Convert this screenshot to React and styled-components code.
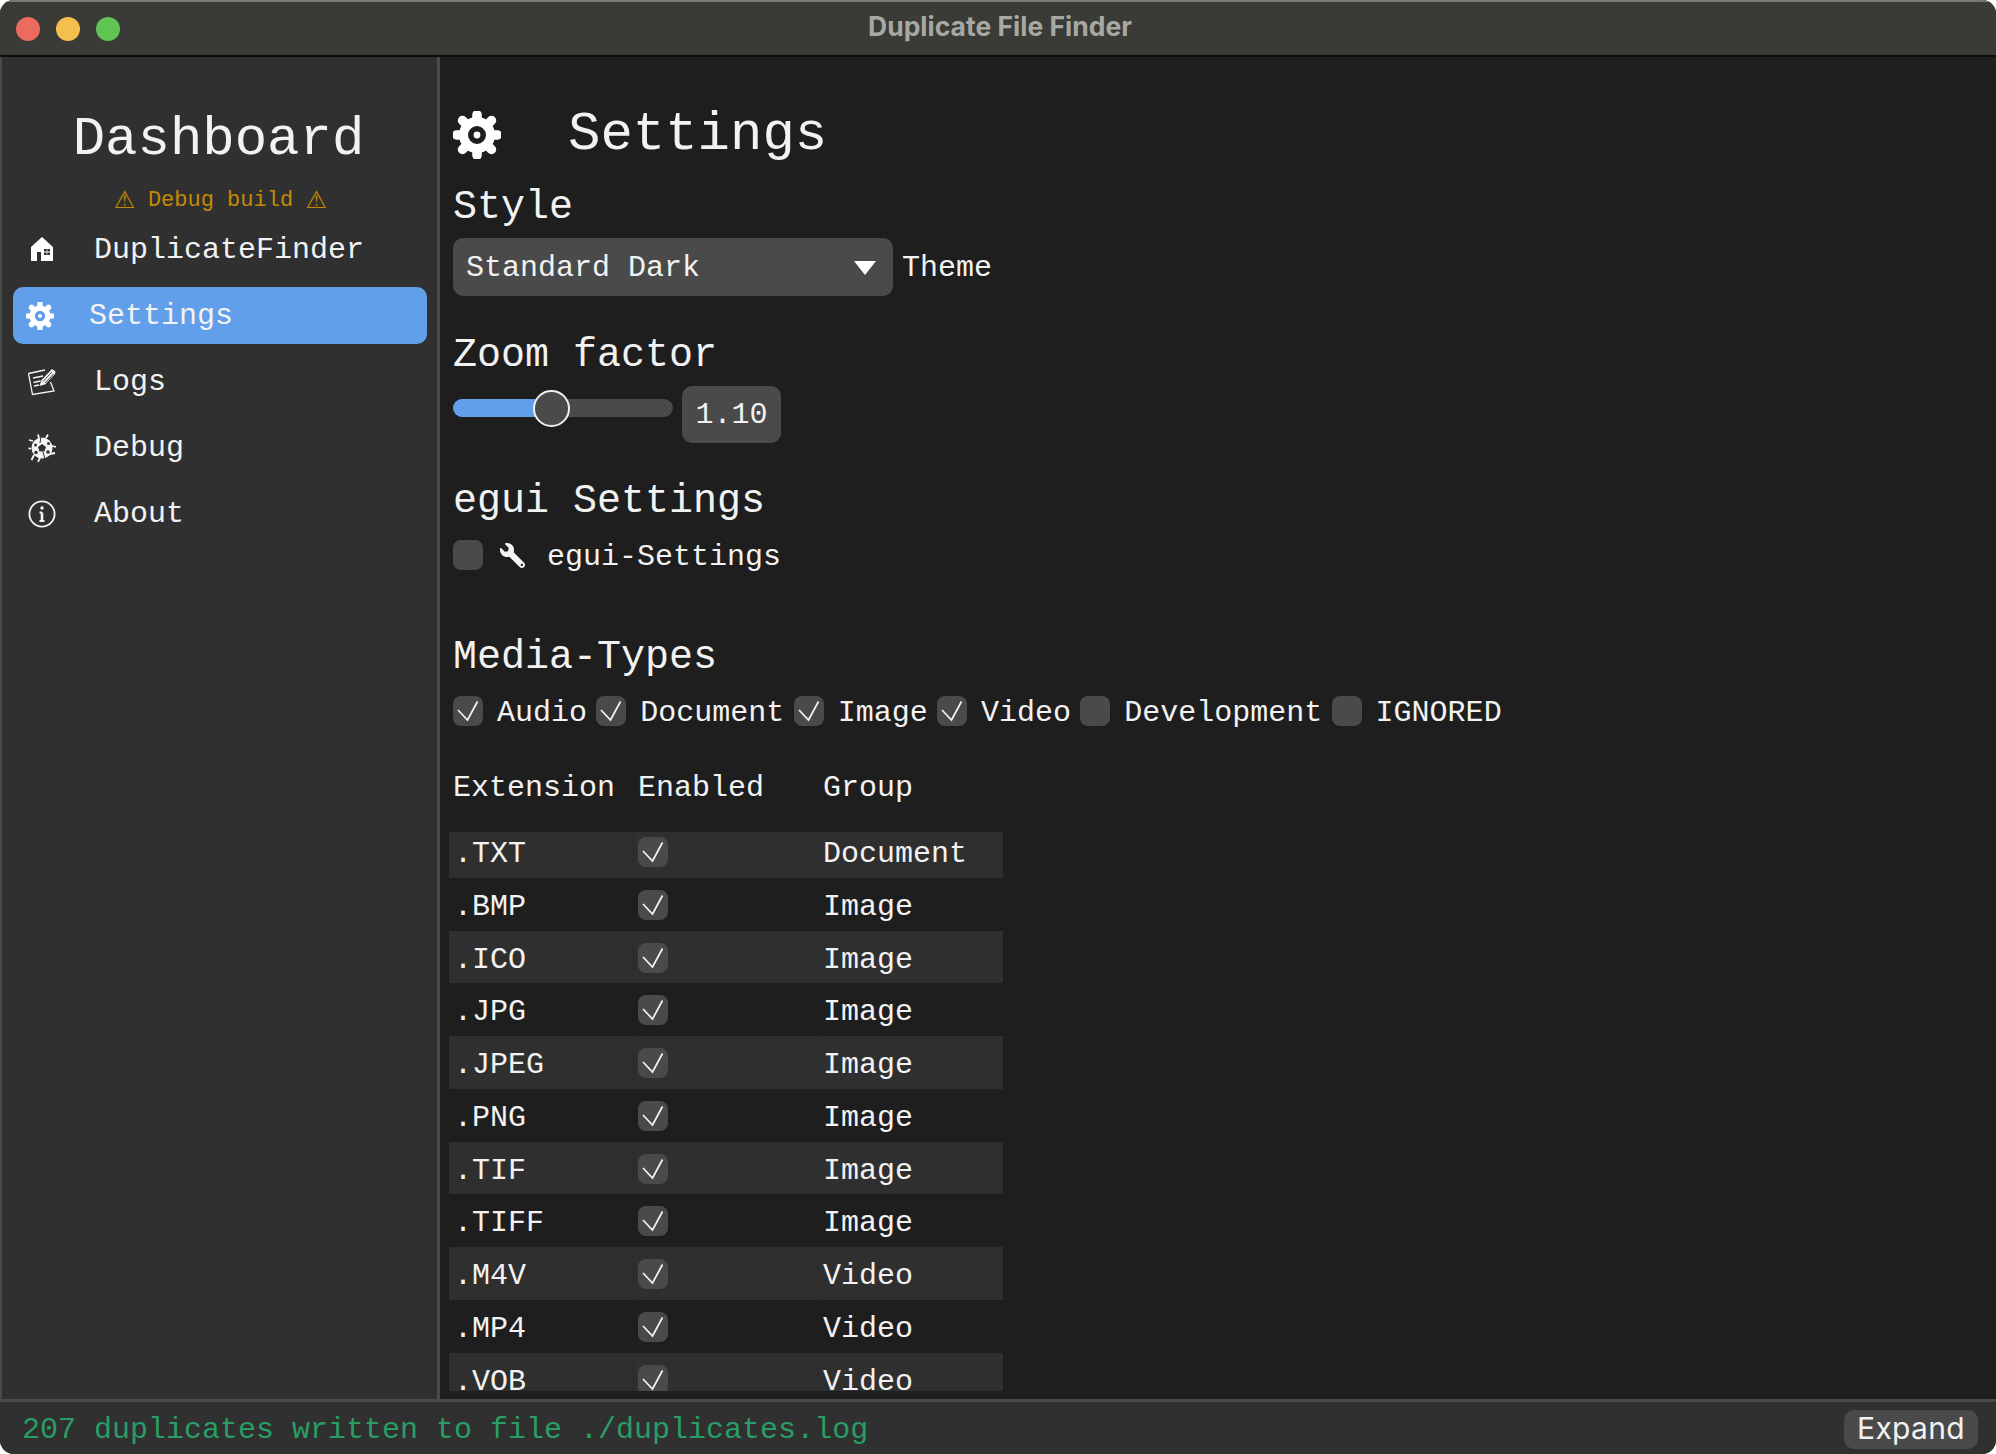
import React from "react";
import styled, { createGlobalStyle } from "styled-components";
import { FaWrench } from "react-icons/fa";

const mono = `"Liberation Mono", "DejaVu Sans Mono", monospace`;
const sans = `Inter, "Liberation Sans", sans-serif`;

const Global = createGlobalStyle`
  html, body { margin: 0; padding: 0; background: #ffffff; overflow: hidden; }
  * { box-sizing: border-box; }
`;

const Win = styled.div`
  width: 1996px; height: 1454px; display: flex; flex-direction: column;
  border-radius: 14px; overflow: hidden; background: #303030;
  font-family: ${mono}; color: #f2f2f2; font-size: 30px; line-height: 40px;
`;
const TitleBar = styled.header`
  height: 57px; flex: none; display: flex; align-items: center; position: relative;
  background: #3a3a36; border-top: 2px solid #7a7a74; border-bottom: 2px solid #0c0c0c;
  padding-left: 16px; gap: 16px;
`;
const Light = styled.span`
  width: 24px; height: 24px; border-radius: 50%; background: ${p => p.$c};
`;
const Title = styled.div`
  position: absolute; left: 0; right: 0; top: 0; bottom: 0; display: flex; align-items: center; justify-content: center;
  padding: 0 0 4px 4px;
  font: 700 26.5px/1 ${sans}; color: #a8a8a2;
`;
const Body = styled.div`flex: 1; display: flex; min-height: 0;`;
const Side = styled.aside`
  width: 440px; flex: none; background: #303030; border-right: 3px solid #4a4a4a;
  border-left: 2px solid #4a4a4a; padding: 0 10px 0 11px; display: flex; flex-direction: column;
`;
const Dash = styled.div`
  font-size: 54px; line-height: 60px; text-align: center; margin-top: 53px; padding-right: 3px;
`;
const DebugNote = styled.div`
  font-size: 22px; line-height: 28px; color: #c48a06; margin-top: 16px;
  display: flex; justify-content: center; align-items: center; gap: 12.5px; padding-left: 1px;
`;
const Warn = styled.span`
  font-family: "DejaVu Sans", sans-serif; font-size: 24px; line-height: 28px; margin-bottom: 2px;
`;
const NavList = styled.nav`display: flex; flex-direction: column; gap: 9px; margin-top: 5px;`;
const NavItem = styled.div`
  height: 57px; display: flex; align-items: center; border-radius: 10px; line-height: 40px;
  background: ${p => (p.$active ? "#619fea" : "transparent")};
  padding-left: ${p => (p.$active ? "13px" : "15px")};
  gap: ${p => (p.$active ? "35px" : "38px")};
`;
const NavIcon = styled.span`width: 28px; height: 28px; flex: none; display: block; svg { display: block; }`;
const Main = styled.main`
  flex: 1; background: #1e1e1e; padding: 48px 0 0 13px; min-width: 0; overflow: hidden;
`;
const PageHead = styled.div`display: flex; align-items: center; height: 60px; gap: 67px; font-size: 54px; line-height: 60px;`;
const H2 = styled.div`font-size: 40px; line-height: 48px; margin-top: ${p => p.$mt}px;`;
const Row = styled.div`display: flex; align-items: center; margin-top: ${p => p.$mt || 0}px;`;
const Select = styled.div`
  width: 440px; height: 58px; border-radius: 10px; background: #4a4a4a; display: flex; align-items: center;
  justify-content: space-between; padding: 2px 17px 0 13px;
`;
const Caret = styled.span`
  width: 0; height: 0; border-left: 11px solid transparent; border-right: 11px solid transparent; border-top: 14px solid #fff;
`;
const Theme = styled.span`margin-left: 9px; padding-top: 2px;`;
const Track = styled.div`
  width: 220px; height: 18px; border-radius: 9px; background: #4a4a4a; position: relative; margin-top: -14px;
`;
const Fill = styled.div`height: 100%; border-radius: 9px 0 0 9px; background: #619fea;`;
const Knob = styled.div`
  position: absolute; top: -9px; width: 37px; height: 37px; border-radius: 50%; background: #4a4a4a; border: 2px solid #f0f0f0;
`;
const Value = styled.div`
  width: 99px; height: 57px; margin-left: 9px; border-radius: 10px; background: #4a4a4a;
  display: flex; align-items: center; justify-content: center;
`;
const Box = styled.span`
  width: 30px; height: 30px; border-radius: 8px; background: #4a4a4a; flex: none; display: block;
  svg { display: block; }
`;
const Check = ({ on }) => (
  <Box>
    {on && (
      <svg width="30" height="30" viewBox="0 0 30 30" fill="none" stroke="#f4f4f4" strokeWidth="1.7">
        <path d="M5 14 L14.5 24 L24.5 5.5" />
      </svg>
    )}
  </Box>
);
const RaisedBox = styled.span`margin-bottom: 4px; display: block; flex: none;`;
const WrenchIcon = styled(FaWrench)`
  width: 25px; height: 25px; margin: 0 22px 4px 17px; transform: scaleX(-1); color: #f4f4f4; flex: none;
`;
const CheckRow = styled.div`display: flex; height: 40px; align-items: center; margin-top: ${p => p.$mt}px;`;
const Media = styled.label`display: flex; align-items: center; gap: 14px; margin-right: 9.3px;`;
const HeadRow = styled.div`
  display: grid; grid-template-columns: 185px 185px 185px; margin-top: ${p => p.$mt}px;
`;
const TableWrap = styled.div`height: 559px; overflow: hidden; margin: 24px 0 0 -4px; width: 554px;`;
const TableBody = styled.div`margin-top: -7px;`;
const TRow = styled.div`
  display: grid; grid-template-columns: 184px 185px 185px; height: 52.75px;
  background: ${p => (p.$odd ? "#2f2f2f" : "transparent")};
`;
const Cell = styled.div`
  padding: 7px 5px 0 4px; line-height: 44px;
  border-left: ${p => (p.$sep && p.$odd ? "1px solid #2a2a2a" : "1px solid transparent")};
`;
const BoxCell = styled(Cell)`padding-top: 12px;`;
const Foot = styled.footer`
  height: 55px; flex: none; background: #303030; border-top: 3px solid #4a4a4a; display: flex; align-items: center;
  justify-content: space-between; padding: 0 18px 0 22px;
`;
const Status = styled.div`color: #2a9d65; line-height: 40px; margin-top: 4px;`;
const Expand = styled.div`
  width: 134px; height: 39px; border-radius: 10px; background: #4a4a4a; font: 400 30px/37px ${sans};
  text-align: center; color: #f2f2f2; letter-spacing: 0.3px; margin-top: 3px;
`;

const Gear = ({ size }) => {
  const a = [0, 45, 90, 135, 180, 225, 270, 315];
  return (
    <svg width={size} height={size} viewBox="0 0 48 48" fill="none" stroke="#fff">
      {a.map(d => (
        <line key={d} x1="24" y1="10" x2="24" y2="3.5" strokeWidth="9.5" strokeLinecap="round" transform={`rotate(${d} 24 24)`} />
      ))}
      <circle cx="24" cy="24" r="13.5" strokeWidth="9" />
      <circle cx="24" cy="24" r="3.4" fill="#fff" stroke="none" />
    </svg>
  );
};
const House = () => (
  <svg width="28" height="28" viewBox="0 0 28 28">
    <path fillRule="evenodd" fill="#fff" d="M14 1 L25 11 V25 H13 V16 H9 V25 H3 V11 Z M16 13 V15.6 H18.7 V13 Z M19.3 13 V15.6 H22 V13 Z M16 16.4 V19 H18.7 V16.4 Z M19.3 16.4 V19 H22 V16.4 Z" />
  </svg>
);
const Logs = () => (
  <svg width="28" height="28" viewBox="0 0 28 28" fill="none" stroke="#f4f4f4" strokeWidth="1.3">
    <path d="M0.5 5.5 L17 2 M0.5 5.5 L4.5 26.5 L26 23 L22.5 14" />
    <path d="M5 10 L15 8 M5.5 14.5 L12.5 13 M6 18 L11 17" />
    <path d="M11.5 18 L13.5 12 L24 1 L27.5 3.5 L27 6 L17 16.5 Z" fill="#f4f4f4" stroke="none" />
    <path d="M15 13.5 L24 4 M17 15 L25.5 6" stroke="#303030" strokeWidth="0.9" />
  </svg>
);
const Bug = () => (
  <svg width="28" height="28" viewBox="0 0 28 28" fill="none" stroke="#f4f4f4" strokeWidth="1.8">
    <circle cx="14" cy="14" r="10.5" fill="#f4f4f4" stroke="none" />
    <path d="M5 7 L1 6 M3 15 L0.5 14 M6 21 L3.5 26 M11 4 L10 0.5 M18 4 L20 0.5 M24 12 L28 13 M22 20 L27 19 M12 24 L10 28" />
    <path d="M14 10 L18 13 L16.5 17.5 L11.5 17.5 L10 13 Z" fill="#303030" stroke="none" />
    <circle cx="7.5" cy="11" r="1.5" fill="#303030" stroke="none" />
    <circle cx="20.5" cy="9.5" r="1.5" fill="#303030" stroke="none" />
    <circle cx="8" cy="18.5" r="1.7" fill="#303030" stroke="none" />
    <circle cx="20" cy="18" r="1.8" fill="#303030" stroke="none" />
    <path d="M13 3 L12 9 M15 18 L17 25" stroke="#303030" strokeWidth="1" />
  </svg>
);
const Info = () => (
  <svg width="28" height="28" viewBox="0 0 28 28" fill="none" stroke="#f4f4f4" strokeWidth="1.8">
    <circle cx="14" cy="14" r="12.6" />
    <path d="M14 12.5 V21" strokeWidth="2.6" />
    <path d="M11.5 12.5 H14 M11.5 21 H16.5" />
    <circle cx="14" cy="8" r="1.7" fill="#f4f4f4" stroke="none" />
  </svg>
);

const rows = [
  [".TXT", "Document"], [".BMP", "Image"], [".ICO", "Image"], [".JPG", "Image"], [".JPEG", "Image"], [".PNG", "Image"],
  [".TIF", "Image"], [".TIFF", "Image"], [".M4V", "Video"], [".MP4", "Video"], [".VOB", "Video"],
];
const media = [["Audio", true], ["Document", true], ["Image", true], ["Video", true], ["Development", false], ["IGNORED", false]];
const nav = [
  ["DuplicateFinder", <House />], ["Settings", <Gear size={28} />, true], ["Logs", <Logs />], ["Debug", <Bug />], ["About", <Info />],
];

export default function App() {
  return (
    <Win>
      <Global />
      <TitleBar>
        <Light $c="#ec6a5e" /><Light $c="#f4bf4f" /><Light $c="#61c554" />
        <Title>Duplicate File Finder</Title>
      </TitleBar>
      <Body>
        <Side>
          <Dash>Dashboard</Dash>
          <DebugNote><Warn>⚠</Warn>Debug build<Warn>⚠</Warn></DebugNote>
          <NavList>
            {nav.map(([t, ic, on]) => (
              <NavItem key={t} $active={on}><NavIcon>{ic}</NavIcon>{t}</NavItem>
            ))}
          </NavList>
        </Side>
        <Main>
          <PageHead><Gear size={48} />Settings</PageHead>
          <H2 $mt={19}>Style</H2>
          <Row $mt={6}>
            <Select>Standard Dark<Caret /></Select>
            <Theme>Theme</Theme>
          </Row>
          <H2 $mt={36}>Zoom factor</H2>
          <Row $mt={6}>
            <Track><Fill style={{ width: "45%" }} /><Knob style={{ left: "80px" }} /></Track>
            <Value>1.10</Value>
          </Row>
          <H2 $mt={35}>egui Settings</H2>
          <CheckRow $mt={11}><RaisedBox><Check /></RaisedBox><WrenchIcon />egui-Settings</CheckRow>
          <H2 $mt={57}>Media-Types</H2>
          <CheckRow $mt={11}>
            {media.map(([t, on]) => (<Media key={t}><RaisedBox><Check on={on} /></RaisedBox>{t}</Media>))}
          </CheckRow>
          <HeadRow $mt={35}><span>Extension</span><span>Enabled</span><span>Group</span></HeadRow>
          <TableWrap>
            <TableBody>
              {rows.map(([e, g], i) => (
                <TRow key={e} $odd={i % 2 === 0}>
                  <Cell>{e}</Cell>
                  <BoxCell $sep $odd={i % 2 === 0}><Check on /></BoxCell>
                  <Cell $sep $odd={i % 2 === 0}>{g}</Cell>
                </TRow>
              ))}
            </TableBody>
          </TableWrap>
        </Main>
      </Body>
      <Foot>
        <Status>207 duplicates written to file ./duplicates.log</Status>
        <Expand>Expand</Expand>
      </Foot>
    </Win>
  );
}
